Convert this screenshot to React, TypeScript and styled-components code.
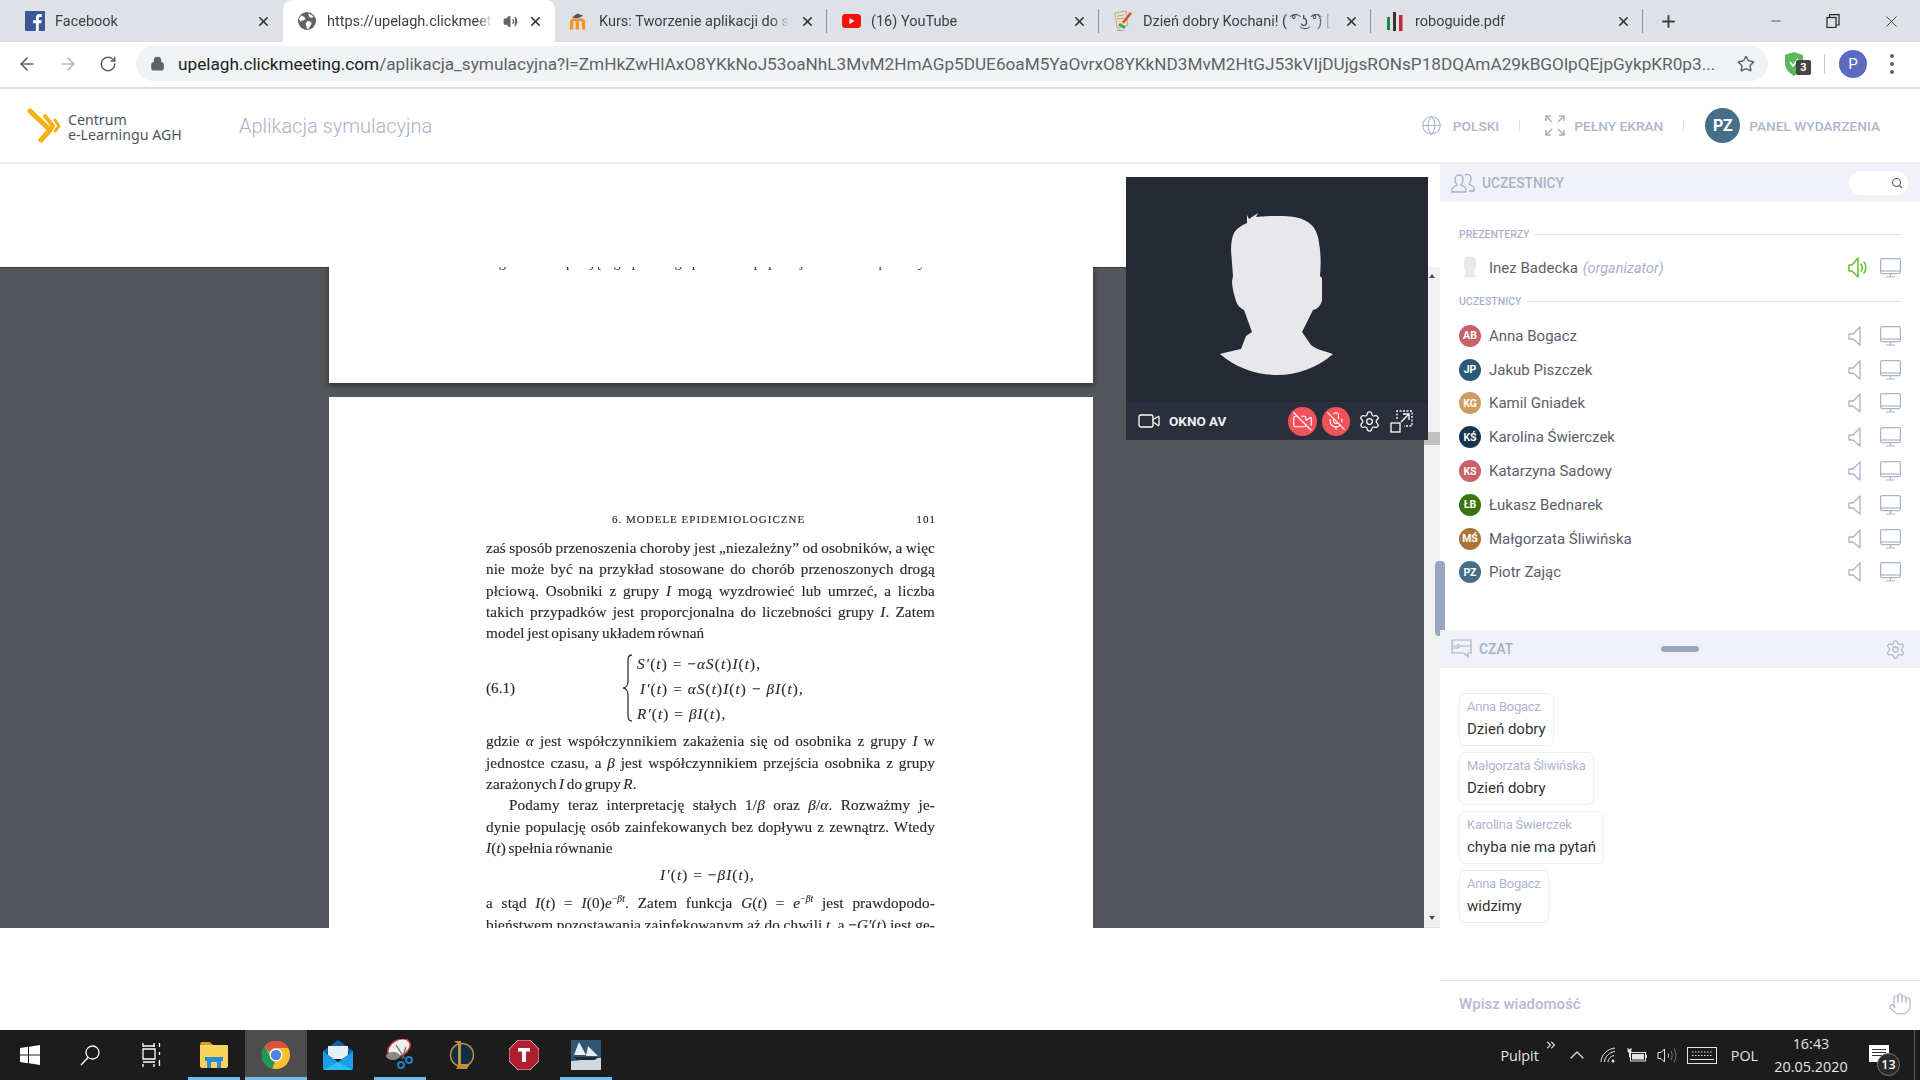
import React from "react";
import styled, { createGlobalStyle } from "styled-components";
import { Globe, Lock, ArrowLeft, ArrowRight, RotateCw, Star, X, Plus, Minus, Search, Video, VideoOff, MicOff, Settings, Volume2, Hand, ChevronUp, ChevronsRight } from "lucide-react";

const Global = createGlobalStyle`
  html, body { margin: 0; padding: 0; background: #fff; overflow: hidden; }
  body { font-family: Roboto, "Liberation Sans", sans-serif; }
  * { box-sizing: border-box; }
`;

const Page = styled.div`
  width: 1920px; height: 1080px; display: flex; flex-direction: column; overflow: hidden; position: relative;
`;

/* ---------- Chrome tabs ---------- */
const TabStrip = styled.div`
  height: 42px; background: #dee1e6; display: flex; padding-left: 11px; align-items: stretch; flex: none;
`;
const Tab = styled.div<{ $active?: boolean; $sep?: boolean }>`
  width: 272px; height: 42px; display: flex; align-items: center; padding: 0 12px 0 14px; gap: 10px; position: relative;
  background: ${(p) => (p.$active ? "#fff" : "transparent")};
  border-radius: ${(p) => (p.$active ? "9px 9px 0 0" : "0")};
  &::after {
    content: ""; display: ${(p) => (p.$sep ? "block" : "none")};
    position: absolute; right: 0; top: 9px; height: 24px; width: 1px; background: #8f9296;
  }
`;
const TabIconSlot = styled.span`
  width: 20px; height: 22px; flex: none; display: flex; align-items: center; justify-content: center;
`;
const TabTitle = styled.span`
  flex: 1; min-width: 0; font-size: 14.5px; color: #3c4043; white-space: nowrap; overflow: hidden;
  mask-image: linear-gradient(90deg, #000 90%, transparent 100%);
`;
const TabClose = styled(X)`
  width: 15px; height: 15px; color: #2d2f33; stroke-width: 2.5; flex: none;
`;
const StripActions = styled.div`
  flex: 1; display: flex; align-items: center; padding-left: 16px; color: #3c4043;
`;
const WindowControls = styled.div`
  margin-left: auto; display: grid; grid-template-columns: 56px 58px 58px; align-items: center; justify-items: center; color: #222; height: 38px;
`;

/* ---------- Toolbar ---------- */
const Toolbar = styled.div`
  height: 47px; flex: none; background: #fff; border-bottom: 2px solid #dadce0; display: flex; align-items: center; padding: 0 0 2px 17px;
`;
const NavIcons = styled.div`
  display: flex; align-items: center; gap: 21px; width: 119px; color: #5f6368; flex: none;
`;
const Omnibox = styled.div`
  width: 1632px; height: 35px; border-radius: 18px; background: #f1f3f4; display: flex; align-items: center; padding: 0 12px 0 14px; flex: none;
`;
const UrlText = styled.div`
  width: 1548px; flex: none; margin: 0 11px 0 13px; font-size: 17.2px; color: #5f6368; white-space: nowrap; overflow: hidden;
  b { font-weight: 400; color: #202124; }
`;
const ToolbarRight = styled.div`
  flex: 1; display: flex; align-items: center; padding-left: 16px; position: relative;
`;
const ExtBadge = styled.span`
  position: absolute; left: 28px; top: 10px; width: 15px; height: 15px; background: #444; color: #fff; border-radius: 2px;
  font-size: 11px; font-weight: 700; display: flex; align-items: center; justify-content: center;
`;
const ToolSep = styled.span`
  width: 1px; height: 20px; background: #c8cacd; margin: 0 14px 0 20px;
`;
const ProfileCircle = styled.span`
  width: 28px; height: 28px; border-radius: 50%; background: #5c6bc0; color: #fff; font-size: 15px;
  display: flex; align-items: center; justify-content: center;
`;
const Dots = styled.span`
  margin-left: 23px; display: flex; flex-direction: column; gap: 4px;
  i { display: block; width: 4px; height: 4px; border-radius: 50%; background: #5f6368; }
`;

/* ---------- App header ---------- */
const AppHeader = styled.header`
  height: 75px; flex: none; background: #fff; border-bottom: 2px solid #eceef2; display: flex; align-items: center; padding: 0 40px 0 27px;
`;
const LogoText = styled.div`
  margin-left: 7px; padding-top: 3px; width: 171px; font-family: "Noto Sans", sans-serif; font-size: 14.2px; line-height: 15px; color: #4f5560; white-space: nowrap;
`;
const AppTitle = styled.div`
  font-size: 20px; font-weight: 300; color: #aab2ca;
`;
const HeaderRight = styled.div`
  margin-left: auto; display: flex; align-items: center; color: #aab2ca;
`;
const HeaderLabel = styled.span<{ $ml?: number }>`
  font-size: 13.7px; font-weight: 500; color: #aeb6ce; margin-left: ${(p) => p.$ml ?? 0}px;
`;
const HeaderSep = styled.span<{ $after?: number }>`
  width: 1px; height: 12px; background: #dde0ea; margin: 0 ${(p) => p.$after ?? 20}px 0 20px;
`;
const HeadAvatar = styled.span`
  width: 35px; height: 35px; border-radius: 50%; background: #456e88; color: #fff; font-weight: 700; font-size: 16px;
  display: flex; align-items: center; justify-content: center; margin: 0 9px 0 1px;
`;

/* ---------- Main ---------- */
const Main = styled.div`
  flex: 1; display: flex; min-height: 0; position: relative;
`;
const Workspace = styled.div`
  width: 1440px; flex: none; display: flex; flex-direction: column;
`;
const TopBand = styled.div`
  height: 103px; flex: none; background: #fff;
`;
const ViewerRow = styled.div`
  height: 661px; flex: none; display: flex;
`;
const Viewer = styled.div`
  flex: 1; background: #53565a; overflow: hidden; padding-left: 329px; box-shadow: inset 0 1px 0 #3a3c3f;
`;
const ScrollTrack = styled.div`
  width: 16px; flex: none; background: #f1f1f1; position: relative; border-bottom: 1px solid #e0e0e0;
`;
const ScrollThumb = styled.div`
  position: absolute; left: 0; right: 0; top: 165px; height: 13px; background: #c1c1c1;
`;
const ArrowUp = styled.div`
  position: absolute; left: 5px; top: 7px; width: 0; height: 0; border: 3.5px solid transparent; border-bottom: 4px solid #505050; border-top: 0;
`;
const ArrowDown = styled.div`
  position: absolute; left: 5px; bottom: 7px; width: 0; height: 0; border: 3.5px solid transparent; border-top: 4px solid #505050; border-bottom: 0;
`;
const DocPageTop = styled.div`
  width: 764px; height: 116px; background: #fff; overflow: hidden; box-shadow: 0 2px 6px rgba(0,0,0,.5);
`;
const ClippedLine = styled.div`
  margin: -12px 0 0 157px; width: 449px; font: 14.5px/1 "Liberation Serif", serif; color: #333; filter: blur(.6px); white-space: nowrap; overflow: hidden;
`;
const DocPage = styled.div`
  width: 764px; height: 540px; margin-top: 14px; background: #fff; padding: 112px 157px 0 157px; overflow: hidden;
  font-family: "Liberation Serif", serif; font-size: 15.2px; color: #2a2a2a;
`;
const DocBlur = styled.div`
  filter: blur(.5px); -webkit-text-stroke: .15px #2a2a2a;
`;
const RunHead = styled.div`
  display: flex; justify-content: space-between; height: 20px; line-height: 20px; font-size: 11px; padding-left: 126px; margin-bottom: 8px; letter-spacing: 1px;
`;
const DocLine = styled.div<{ $indent?: boolean; $last?: boolean }>`
  height: 21.3px; line-height: 21.3px; width: 449px; letter-spacing: .15px; word-spacing: -1.5px;
  text-align: justify; text-align-last: ${(p) => (p.$last ? "left" : "justify")};
  padding-left: ${(p) => (p.$indent ? "23px" : "0")};
`;
const Equations = styled.div`
  display: flex; align-items: center; height: 84px; margin: 3px 0 0;
`;
const EqNum = styled.span`
  width: 136px; flex: none;
`;
const BraceBox = styled.span`
  display: flex; flex: none; width: 11px; margin-right: 4px;
`;
const EqRows = styled.div`
  line-height: 25px; white-space: nowrap; letter-spacing: 1.1px;
`;
const EqRow = styled.div<{ $shift?: boolean }>`
  padding-left: ${(p) => (p.$shift ? 3 : 0)}px;
`;
const EqCentered = styled.div`
  height: 29px; line-height: 29px; text-align: center; margin: 2px 0 3px; padding-right: 7px; letter-spacing: 1.1px;
`;
const Sup = styled.sup`
  font-size: 9.5px; line-height: 0;
`;
const BottomBand = styled.div`
  flex: 1; background: #fff;
`;

/* ---------- AV window ---------- */
const AvWindow = styled.div`
  position: absolute; left: 1126px; top: 13px; width: 302px; height: 263px; background: #262a35; display: flex; flex-direction: column;
`;
const AvStage = styled.div`
  flex: 1; display: flex; align-items: flex-start; justify-content: center; padding-top: 36px;
`;
const AvBar = styled.div`
  height: 38px; flex: none; background: #2b2f3b; display: flex; align-items: center; padding: 0 15px 0 11px; color: #fff;
`;
const AvLabel = styled.span`
  font-size: 13.5px; font-weight: 700; color: #eef0f4; margin-left: 8px;
`;
const AvControls = styled.div`
  margin-left: auto; display: flex; align-items: center;
`;
const AvButton = styled.span`
  width: 28.5px; height: 29px; border-radius: 50%; background: #f4525a; display: flex; align-items: center; justify-content: center; margin-right: 5px;
`;
const AvPlain = styled.span<{ $ml: number }>`
  margin-left: ${(p) => p.$ml}px; display: flex; color: #fff;
`;

/* ---------- Sidebar ---------- */
const Sidebar = styled.aside`
  flex: 1; display: flex; flex-direction: column; background: #fff; position: relative;
`;
const SideThumb = styled.div`
  position: absolute; left: -5px; top: 397px; width: 10px; height: 75px; border-radius: 4px; background: #9aa5c0;
`;
const PanelHead = styled.div<{ $h: number }>`
  height: ${(p) => p.$h}px; flex: none; background: #f0f2f8; display: flex; align-items: center; padding: 0 12px 0 11px; color: #a5aec8; position: relative;
`;
const PanelTitle = styled.span`
  font-size: 13.8px; font-weight: 500; color: #a9b1c9; margin-left: 7px;
`;
const HandleBar = styled.span`
  position: absolute; left: 221px; top: 16px; width: 38px; height: 6px; border-radius: 3px; background: #9aa5c0;
`;
const HeadGear = styled.span`
  margin-left: auto; margin-right: 2px; display: flex;
`;
const SearchPill = styled.div`
  margin-left: auto; width: 59px; height: 24px; border-radius: 12px; background: #fff; display: flex; align-items: center; justify-content: flex-end; padding-right: 5px; color: #555b68;
`;
const Participants = styled.div`
  height: 428px; flex: none; padding: 23px 19px 0 19px;
`;
const GroupLabel = styled.div`
  display: flex; align-items: center; gap: 5px; font-size: 10.5px; font-weight: 500; color: #aab2ca; height: 18px;
  &::after { content: ""; flex: 1; height: 1px; background: #dfe2ee; }
`;
const ListGap = styled.div`
  height: 9px;
`;
const PersonRow = styled.div<{ $h?: number }>`
  height: ${(p) => p.$h ?? 33.8}px; display: flex; align-items: center;
`;
const AvatarCircle = styled.span<{ $c: string }>`
  width: 22px; height: 22px; border-radius: 50%; background: ${(p) => p.$c}; color: #fff; font-size: 10.5px; font-weight: 700;
  display: flex; align-items: center; justify-content: center; flex: none;
`;
const GhostAvatar = styled.span`
  width: 22px; display: flex; justify-content: center; flex: none;
`;
const PersonName = styled.span`
  margin-left: 8px; font-size: 15px; color: #5b606c;
  em { color: #a9b1c9; font-size: 14.5px; margin-left: 1px; }
`;
const PersonIcons = styled.span`
  margin-left: auto; display: flex; align-items: center; gap: 11px; color: #aab2ca;
`;
const SpeakerSlot = styled.span`
  width: 21px; display: flex;
`;
const ChatList = styled.div`
  flex: 1; padding: 25px 19px 0; display: flex; flex-direction: column; align-items: flex-start; gap: 6px;
`;
const Bubble = styled.div`
  height: 53px; border: 1px solid #eceef5; border-radius: 6px; padding: 3px 7px 0;
`;
const BubbleName = styled.div`
  font-size: 13px; line-height: 20px; color: #aeb6ce; letter-spacing: -.25px; white-space: nowrap;
`;
const BubbleText = styled.div`
  font-size: 15px; line-height: 25px; color: #333; white-space: nowrap;
`;
const ChatInput = styled.div`
  height: 50px; flex: none; border-top: 1px solid #e6e8f1; display: flex; align-items: center; padding: 0 8px 3px 19px; color: #aab2ca;
`;
const Placeholder = styled.span`
  font-size: 15px; font-weight: 500; color: #b3bad0;
`;
const HandSlot = styled.span`
  margin-left: auto; display: flex;
`;

/* ---------- Taskbar ---------- */
const Taskbar = styled.div`
  height: 50px; flex: none; background: #1c1c1c; display: flex; align-items: center; color: #fff;
`;
const TaskItem = styled.div<{ $active?: boolean; $open?: boolean; $ml?: number }>`
  width: 62px; height: 50px; flex: none; display: flex; align-items: center; justify-content: center; position: relative;
  margin-left: ${(p) => p.$ml ?? 0}px;
  background: ${(p) => (p.$active ? "#4d4d4d" : "transparent")};
  &::after {
    content: ""; display: ${(p) => (p.$open ? "block" : "none")}; position: absolute; bottom: 0; height: 3px;
    left: ${(p) => (p.$active ? 0 : 5)}px; right: ${(p) => (p.$active ? 0 : 5)}px; background: #76b9ed;
  }
`;
const Tray = styled.div`
  margin-left: auto; display: flex; align-items: center; height: 50px; position: relative; padding-right: 5px;
`;
const TrayText = styled.span<{ $ml?: number }>`
  font-size: 14.3px; color: #e4e4e4; margin-left: ${(p) => p.$ml ?? 0}px; font-family: "Open Sans", sans-serif;
`;
const TrayIcon = styled.span<{ $ml?: number; $raise?: number }>`
  display: flex; margin-left: ${(p) => p.$ml ?? 0}px; margin-top: ${(p) => -(p.$raise ?? 0)}px; color: #e4e4e4;
`;
const Clock = styled.div`
  width: 78px; margin-left: 14px; text-align: center; font-family: "Open Sans", sans-serif; font-size: 14.4px; line-height: 23px; color: #e4e4e4; white-space: nowrap;
`;
const NotifyBox = styled.div`
  width: 46px; height: 50px; margin-left: 19px; position: relative; border-right: 1px solid #5a5a5a;
`;
const NotifySheet = styled.span`
  position: absolute; left: 0; top: 15px; width: 20px; height: 17px; background: #fff; padding: 4px 3px;
  display: flex; flex-direction: column; gap: 2px;
  i { display: block; height: 1px; background: #333; }
`;
const NotifyCount = styled.span`
  position: absolute; left: 8px; top: 23px; width: 23px; height: 23px; border-radius: 50%; background: #2a2a2a; border: 1px solid #777;
  font-family: "Open Sans", sans-serif; font-size: 12.5px; font-weight: 600; color: #fff; display: flex; align-items: center; justify-content: center;
`;

/* ---------- Drawn icons ---------- */
const FacebookIcon = () => (
  <svg width="20" height="20" viewBox="0 0 20 20"><rect width="20" height="20" rx="1" fill="#3b5998" /><path d="M13.8 20v-7.7h2.5l.4-3h-2.9V7.4c0-.9.3-1.5 1.5-1.5h1.5V3.2c-.3 0-1.2-.1-2.2-.1-2.2 0-3.7 1.3-3.7 3.8v2.3H8v3h2.9V20z" fill="#fff" /></svg>
);
const GlobeFilled = () => (
  <svg width="18" height="18" viewBox="0 0 18 18"><circle cx="9" cy="9" r="9" fill="#5f6368" /><path d="M3 3.500c2 .5 3 1 4 2.500s-1 2.500-2 2.500-2 0-2.500 1.500L1 7zM10 9c2 0 3.500 1 3.500 2.500S12 14 11 16s-2.500 1-2.500-1S7 12 8 11s.5-2 2-2zM11 1c1 2 2 2 3 2l1.500 2c-1 1-3 1-4 0S10 2 11 1z" fill="#fff" /></svg>
);
const MoodleIcon = () => (
  <svg width="21" height="18" viewBox="0 0 21 18"><path d="M1 18V10c0-2.500 2-4 4-4 1.500 0 2.500.5 3.500 1.500C9.500 6.500 11 6 12.500 6c3 0 4.500 2 4.500 4.500V18h-3.500v-7.500c0-1-.5-1.500-1.500-1.500s-1.500.5-1.500 1.500V18H7v-7.500C7 9.500 6.500 9 5.500 9S4.500 9.500 4.500 10.500V18z" fill="#f2932a" /><path d="M3 5l6-4 6 2.500-6 3z" fill="#555" /></svg>
);
const YouTubeIcon = () => (
  <svg width="19" height="14" viewBox="0 0 19 14"><rect width="19" height="14" rx="3.500" fill="#fa0f0f" /><path d="M7.500 4v6l5-3z" fill="#fff" /></svg>
);
const NotepadIcon = () => (
  <svg width="20" height="22" viewBox="0 0 20 22"><path d="M2 3l11-2 2 14-11 3z" fill="#e9dfc4" stroke="#999" strokeWidth=".7" /><path d="M4 6l7-1M4 9l7-1" stroke="#b88" strokeWidth=".8" /><path d="M9 12l8-10 2 1.500-8 10z" fill="#d8502a" /><path d="M5 15l6 4 2-2-6-4z" fill="#3caa3c" /><path d="M5 19l8 2-9 0z" fill="#aaa" /></svg>
);
const PdfBarsIcon = () => (
  <svg width="16" height="21" viewBox="0 0 16 21"><rect x="0" y="6" width="3" height="13" fill="#1c8a47" /><rect x="6" y="1" width="3" height="19" fill="#333" /><rect x="12" y="4" width="3.500" height="16" fill="#c8223b" /></svg>
);
const RestoreIcon = () => (
  <svg width="14" height="14" viewBox="0 0 14 14" fill="none" stroke="#222" strokeWidth="1.200"><rect x="1" y="3.500" width="9" height="10" /><path d="M3.500 3.500V.6H13v10.400h-3" /></svg>
);
const Logo = () => (
  <svg width="34" height="35" viewBox="0 0 34 35" fill="none" stroke="#f7b011" strokeLinecap="round" strokeLinejoin="round"><path d="M3 3l20 19-9 10" strokeWidth="5" /><path d="M18 8l8 10-6 8" strokeWidth="4" /><path d="M28 12l4 6-4 5" strokeWidth="3" /></svg>
);
const ExpandIcon = () => (
  <svg width="20" height="21" viewBox="0 0 20 21" fill="none" stroke="#aab2ca" strokeWidth="1.500"><path d="M1 6V1h5M1 1l6 6M19 6V1h-5M19 1l-6 6M1 15v5h5M1 20l6-6M19 15v5h-5M19 20l-6-6" /></svg>
);
const PeopleIcon = () => (
  <svg width="24" height="20" viewBox="0 0 24 20" fill="none" stroke="#a5aec8" strokeWidth="1.300"><path d="M1 19v-3c0-2 4-3 5-4 0-1-2-2-2-5 0-3 1.500-5 4-5s4 2 4 5c0 3-2 4-2 5 1 1 5 2 5 4v3z" /><path d="M14 2c2-1 6-1 6 4 0 3-2 4-2 5 1 1 5 2 5 4v3h-5" /></svg>
);
const Silhouette = () => (
  <svg width="114" height="163" viewBox="0 0 114 163" fill="#e7e7ec"><path d="M27 2l2 4 9-6-2 4C48 3 52 3 58 3c12 0 22 1 28 5 8 4 12 12 13 22 2 10 2 22 1 33l2 2v22c-1 5-4 9-9 10l-11 22 9 13c3 3 9 5 22 9-16 14-36 21-56 21S16 155 0 141c8-2 15-4 21-5l5-13 6-4-8-22c-4-2-7-5-8-9-2-7-4-13-4-20l1-5-2-26c0-7 1-13 3-17 3-5 8-8 13-10z" /></svg>
);
const OutlineSpeaker = () => (
  <svg width="13" height="20" viewBox="0 0 13 20" fill="none" stroke="#aab2ca" strokeWidth="1.300" strokeLinejoin="round"><path d="M12 1v18L5 13H1V8h4z" /></svg>
);
const GreenSpeaker = () => (
  <svg width="21" height="21" viewBox="0 0 21 21" fill="none" stroke="#62c02e" strokeWidth="1.500" strokeLinejoin="round" strokeLinecap="round"><path d="M10 1v19L4 14H1V8h3z" /><path d="M13 7c1.500 2 1.500 5 0 7M16 5c2.500 3 2.500 8 0 11" /></svg>
);
const Screen = () => (
  <svg width="21" height="20" viewBox="0 0 21 20" fill="none" stroke="#aab2ca" strokeWidth="1.200"><rect x=".6" y=".6" width="19.800" height="15" rx="1.500" /><path d="M1 13h19" /><path d="M10.500 16v2.500M6 19h9" /></svg>
);
const ChatIcon = () => (
  <svg width="21" height="20" viewBox="0 0 21 20" fill="none" stroke="#aab2ca" strokeWidth="1.200"><path d="M1 1h19v13h-3v4l-4-4H1z" /><path d="M1 7h5l2-2M20 7H9l-2 2H1" /></svg>
);
const CurlyBrace = () => (
  <svg width="11" height="68" viewBox="0 0 11 68" fill="none" stroke="#333" strokeWidth="1.300"><path d="M10 1C6 1 6 4 6 8v19c0 4-2 7-5 7 3 0 5 3 5 7v19c0 4 0 7 4 7" /></svg>
);
const WindowsLogo = () => (
  <svg width="20" height="20" viewBox="0 0 20 20" fill="#fff"><path d="M0 3l8-1.200v7.700H0zM9 1.700L20 0v9.500H9zM0 10.500h8v7.700L0 17zM9 10.500h11V20L9 18.300z" /></svg>
);
const SearchGlass = () => (
  <svg width="20" height="21" viewBox="0 0 20 21" fill="none" stroke="#fff" strokeWidth="1.300"><circle cx="12.500" cy="7.500" r="6.500" /><path d="M8 12.500L1 20" /></svg>
);
const TaskView = () => (
  <svg width="20" height="26" viewBox="0 0 20 26" fill="none" stroke="#fff" strokeWidth="1.300"><path d="M1 5V1M12 5V1M1 7h12v10H1zM1 20h12M1 25v-3M12 25v-3M1 4h12M17.500 1v4M17.500 10v3M17.500 18v6" /></svg>
);
const FolderIcon = () => (
  <svg width="28" height="28" viewBox="0 0 28 28"><path d="M0 3c0-1 1-2 2-2h8l3 3H1z" fill="#d99a16" /><path d="M0 4h27c.5 0 1 .5 1 1v20c0 1-1 2-2 2H2c-1 0-2-1-2-2z" fill="#fbd35a" /><path d="M5 16h18v4h-2v7h-4v-6h-6v6H7v-7H5z" fill="#2a8dd8" /></svg>
);
const ChromeLogo = () => (
  <svg width="28" height="28" viewBox="0 0 28 28"><circle cx="14" cy="14" r="14" fill="#fbc02d" /><path d="M14 0a14 14 0 0 1 12.100 7H14a7 7 0 0 0-6.500 4.500L2.800 5.600A14 14 0 0 1 14 0z" fill="#dd5044" /><path d="M2.800 5.600l5 8.500A7 7 0 0 0 13 21l-3 7A14 14 0 0 1 2.800 5.600z" fill="#1f9a55" /><circle cx="14" cy="14" r="6.500" fill="#fff" /><circle cx="14" cy="14" r="5.200" fill="#4a84e8" /></svg>
);
const MailIcon = () => (
  <svg width="30" height="30" viewBox="0 0 30 30"><path d="M0 11L15 0l15 11v2H0z" fill="#0a62b4" /><path d="M5 6h20v13H5z" fill="#e6f0f7" /><path d="M0 11l15 11 15-11v17a2 2 0 0 1-2 2H2a2 2 0 0 1-2-2z" fill="#1d9be6" /><path d="M0 30l15-8 15 8z" fill="#29c0f5" /></svg>
);
const SnipIcon = () => (
  <svg width="28" height="32" viewBox="0 0 28 32"><ellipse cx="13" cy="9" rx="12" ry="8" fill="#eee" stroke="#c9373a" strokeWidth="1.500" transform="rotate(-30 13 9)" /><ellipse cx="7" cy="17" rx="7" ry="4" fill="#888" /><path d="M10 6l9 14M20 8L16 20" stroke="#666" strokeWidth="1.200" /><circle cx="15" cy="26" r="3" fill="none" stroke="#1784c8" strokeWidth="2" /><circle cx="23" cy="21" r="3" fill="none" stroke="#1784c8" strokeWidth="2" /></svg>
);
const LolIcon = () => (
  <svg width="26" height="30" viewBox="0 0 26 30"><circle cx="13" cy="15" r="11.500" fill="#0e2e47" stroke="#c0903c" strokeWidth="1.500" /><path d="M5 1h7v23h9l-3 5H7l2-3V4z" fill="#c0903c" /></svg>
);
const StopT = () => (
  <svg width="30" height="30" viewBox="0 0 30 30"><path d="M9 0h12l9 9v12l-9 9H9l-9-9V9z" fill="#b01e30" stroke="#ddd" strokeWidth=".8" /><path d="M9 8h12v3.500h-4V22h-4V11.500H9z" fill="#fff" /></svg>
);
const BoatIcon = () => (
  <svg width="30" height="30" viewBox="0 0 30 30"><rect width="30" height="30" fill="#31566f" /><path d="M8 2l7 13H3zM17 6l10 10H15z" fill="#e6eef3" /><path d="M0 21c8 0 18-3 30-3v12H0z" fill="#cfd8de" /><path d="M3 17h24l-3 3H6z" fill="#1a2c3a" /></svg>
);
const WifiIcon = () => (
  <svg width="16" height="16" viewBox="0 0 16 16" fill="none" stroke="#e4e4e4" strokeWidth="1"><path d="M1 15C1 8 7 2 15 1M4.500 15c0-5 5-10 10.500-10.500M8 15c0-3 3-6 6-6.500" /><circle cx="13" cy="14" r="1.500" fill="#e4e4e4" stroke="none" /></svg>
);
const BatteryIcon = () => (
  <svg width="20" height="15" viewBox="0 0 20 15" fill="none" stroke="#e4e4e4"><rect x="3.500" y="4.500" width="15" height="8.500" /><rect x="5" y="6" width="12" height="5.500" fill="#e4e4e4" stroke="none" /><path d="M19.500 7v3" /><circle cx="2.500" cy="3" r="2" fill="#e4e4e4" stroke="none" /><path d="M1 0v2M4 0v2M2.500 5v4h1" /></svg>
);
const VolumeIcon = () => (
  <svg width="20" height="17" viewBox="0 0 20 17" fill="none" stroke="#e4e4e4" strokeWidth="1"><path d="M1 5.500h3L7.500 2v13L4 11.500H1z" /><path d="M11 6.500c.8 1.200.8 2.800 0 4" /><path d="M14 4c1.500 2.500 1.500 6.500 0 9M17 1.500c2.500 4 2.500 10 0 14" stroke="#777" /></svg>
);
const KeyboardIcon = () => (
  <svg width="30" height="17" viewBox="0 0 30 17" fill="none" stroke="#e4e4e4"><rect x=".5" y=".5" width="29" height="16" /><path d="M5 5h20M5 8.500h20" strokeDasharray="1.500 1.500" /><path d="M3 12.500h24" strokeWidth="1" /></svg>
);

const tabs = [
  { icon: <FacebookIcon />, title: "Facebook" },
  { icon: <GlobeFilled />, title: "https://upelagh.clickmeet", active: true, audio: true },
  { icon: <MoodleIcon />, title: "Kurs: Tworzenie aplikacji do s", sep: true },
  { icon: <YouTubeIcon />, title: "(16) YouTube", sep: true },
  { icon: <NotepadIcon />, title: "Dzień dobry Kochani! ( ͡° ͜ʖ ͡°) [", sep: true },
  { icon: <PdfBarsIcon />, title: "roboguide.pdf", sep: true },
];

const people = [
  ["AB", "#c9616b", "Anna Bogacz"],
  ["JP", "#2a5a78", "Jakub Piszczek"],
  ["KG", "#cf9d62", "Kamil Gniadek"],
  ["KŚ", "#15384f", "Karolina Świerczek"],
  ["KS", "#c9616b", "Katarzyna Sadowy"],
  ["ŁB", "#3b730f", "Łukasz Bednarek"],
  ["MŚ", "#a97434", "Małgorzata Śliwińska"],
  ["PZ", "#456e88", "Piotr Zając"],
];

const messages = [
  ["Anna Bogacz", "Dzień dobry"],
  ["Małgorzata Śliwińska", "Dzień dobry"],
  ["Karolina Świerczek", "chyba nie ma pytań"],
  ["Anna Bogacz", "widzimy"],
];

export default function App() {
  return (
    <Page>
      <Global />
      <TabStrip>
        {tabs.map((t) => (
          <Tab key={t.title} $active={t.active} $sep={t.sep}>
            <TabIconSlot>{t.icon}</TabIconSlot>
            <TabTitle>{t.title}</TabTitle>
            {t.audio && <Volume2 size={15} color="#5f6368" fill="#5f6368" />}
            <TabClose />
          </Tab>
        ))}
        <StripActions>
          <Plus size={19} strokeWidth={2.4} />
          <WindowControls>
            <Minus size={14} strokeWidth={1.2} />
            <RestoreIcon />
            <X size={19} strokeWidth={1} />
          </WindowControls>
        </StripActions>
      </TabStrip>

      <Toolbar>
        <NavIcons>
          <ArrowLeft size={20} />
          <ArrowRight size={20} color="#b6b8bb" />
          <RotateCw size={18} />
        </NavIcons>
        <Omnibox>
          <Lock size={15} color="#5f6368" fill="#5f6368" />
          <UrlText>
            <b>upelagh.clickmeeting.com</b>/aplikacja_symulacyjna?l=ZmHkZwHlAxO8YKkNoJ53oaNhL3MvM2HmAGp5DUE6oaM5YaOvrxO8YKkND3MvM2HtGJ53kVIjDUjgsRONsP18DQAmA29kBGOlpQEjpGykpKR0p3...
          </UrlText>
          <Star size={18} color="#5f6368" />
        </Omnibox>
        <ToolbarRight>
          <svg width="20" height="26" viewBox="0 0 20 26"><path d="M10 1l9 3v8c0 6-4 10-9 13C5 22 1 18 1 12V4z" fill="#5cb85c" /><path d="M6 11l3 4 5-7" stroke="#fff" strokeWidth="1.600" fill="none" /></svg>
          <ExtBadge>3</ExtBadge>
          <ToolSep />
          <ProfileCircle>P</ProfileCircle>
          <Dots><i /><i /><i /></Dots>
        </ToolbarRight>
      </Toolbar>

      <AppHeader>
        <Logo />
        <LogoText>Centrum<br />e-Learningu AGH</LogoText>
        <AppTitle>Aplikacja symulacyjna</AppTitle>
        <HeaderRight>
          <Globe size={21} strokeWidth={1.2} />
          <HeaderLabel $ml={11}>POLSKI</HeaderLabel>
          <HeaderSep $after={25} />
          <ExpandIcon />
          <HeaderLabel $ml={9}>PEŁNY EKRAN</HeaderLabel>
          <HeaderSep />
          <HeadAvatar>PZ</HeadAvatar>
          <HeaderLabel>PANEL WYDARZENIA</HeaderLabel>
        </HeaderRight>
      </AppHeader>

      <Main>
        <Workspace>
          <TopBand />
          <ViewerRow>
            <Viewer>
              <DocPageTop>
                <ClippedLine>zagadnienia opisującego przebieg epidemii w populacji osobników podatnych</ClippedLine>
              </DocPageTop>
              <DocPage>
                <DocBlur>
                  <RunHead><span>6. MODELE EPIDEMIOLOGICZNE</span><span>101</span></RunHead>
                  <DocLine>zaś sposób przenoszenia choroby jest „niezależny” od osobników, a więc</DocLine>
                  <DocLine>nie może być na przykład stosowane do chorób przenoszonych drogą</DocLine>
                  <DocLine>płciową. Osobniki z grupy <i>I</i> mogą wyzdrowieć lub umrzeć, a liczba</DocLine>
                  <DocLine>takich przypadków jest proporcjonalna do liczebności grupy <i>I</i>. Zatem</DocLine>
                  <DocLine $last>model jest opisany układem równań</DocLine>
                  <Equations>
                    <EqNum>(6.1)</EqNum>
                    <BraceBox><CurlyBrace /></BraceBox>
                    <EqRows>
                      <EqRow><i>S′</i>(<i>t</i>) = −<i>αS</i>(<i>t</i>)<i>I</i>(<i>t</i>),</EqRow>
                      <EqRow $shift><i>I′</i>(<i>t</i>) = <i>αS</i>(<i>t</i>)<i>I</i>(<i>t</i>) − <i>βI</i>(<i>t</i>),</EqRow>
                      <EqRow><i>R′</i>(<i>t</i>) = <i>βI</i>(<i>t</i>),</EqRow>
                    </EqRows>
                  </Equations>
                  <DocLine>gdzie <i>α</i> jest współczynnikiem zakażenia się od osobnika z grupy <i>I</i> w</DocLine>
                  <DocLine>jednostce czasu, a <i>β</i> jest współczynnikiem przejścia osobnika z grupy</DocLine>
                  <DocLine $last>zarażonych <i>I</i> do grupy <i>R</i>.</DocLine>
                  <DocLine $indent>Podamy teraz interpretację stałych 1/<i>β</i> oraz <i>β</i>/<i>α</i>. Rozważmy je-</DocLine>
                  <DocLine>dynie populację osób zainfekowanych bez dopływu z zewnątrz. Wtedy</DocLine>
                  <DocLine $last><i>I</i>(<i>t</i>) spełnia równanie</DocLine>
                  <EqCentered><i>I′</i>(<i>t</i>) = −<i>βI</i>(<i>t</i>),</EqCentered>
                  <DocLine>a stąd <i>I</i>(<i>t</i>) = <i>I</i>(0)<i>e</i><Sup>−<i>βt</i></Sup>. Zatem funkcja <i>G</i>(<i>t</i>) = <i>e</i><Sup>−<i>βt</i></Sup> jest prawdopodo-</DocLine>
                  <DocLine>bieństwem pozostawania zainfekowanym aż do chwili <i>t</i>, a −<i>G′</i>(<i>t</i>) jest ge-</DocLine>
                </DocBlur>
              </DocPage>
            </Viewer>
            <ScrollTrack>
              <ArrowUp />
              <ScrollThumb />
              <ArrowDown />
            </ScrollTrack>
          </ViewerRow>
          <BottomBand />
        </Workspace>

        <AvWindow>
          <AvStage><Silhouette /></AvStage>
          <AvBar>
            <Video size={24} strokeWidth={1.3} />
            <AvLabel>OKNO AV</AvLabel>
            <AvControls>
              <AvButton><VideoOff size={21} strokeWidth={1.3} color="#fff" /></AvButton>
              <AvButton><MicOff size={20} strokeWidth={1.3} color="#fff" /></AvButton>
              <AvPlain $ml={3}><Settings size={23} strokeWidth={1.3} /></AvPlain>
              <AvPlain $ml={9}>
                <svg width="23" height="23" viewBox="0 0 23 23" fill="none" stroke="#fff" strokeWidth="1.300"><rect x="1" y="13" width="9" height="9" /><path d="M7 9V1h15v15h-8" strokeDasharray="2 1.500" /><path d="M11 12l8-8M13 4h6v6" /></svg>
              </AvPlain>
            </AvControls>
          </AvBar>
        </AvWindow>

        <Sidebar>
          <SideThumb />
          <PanelHead $h={38}>
            <PeopleIcon />
            <PanelTitle>UCZESTNICY</PanelTitle>
            <SearchPill><Search size={12} strokeWidth={2.2} /></SearchPill>
          </PanelHead>
          <Participants>
            <GroupLabel>PREZENTERZY</GroupLabel>
            <PersonRow $h={49}>
              <GhostAvatar>
                <svg width="14" height="21" viewBox="0 0 14 21" fill="#e7e7ec"><path d="M3 0h8c2 1 2 4 2 8 0 3-1 5-2 6l1 4 2 1c-3 2-11 2-14 0l2-1 1-4C2 13 1 11 1 8c0-4 0-7 2-8z" /></svg>
              </GhostAvatar>
              <PersonName>Inez Badecka <em>(organizator)</em></PersonName>
              <PersonIcons><SpeakerSlot><GreenSpeaker /></SpeakerSlot><Screen /></PersonIcons>
            </PersonRow>
            <GroupLabel>UCZESTNICY</GroupLabel>
            <ListGap />
            {people.map(([a, c, n]) => (
              <PersonRow key={n}>
                <AvatarCircle $c={c}>{a}</AvatarCircle>
                <PersonName>{n}</PersonName>
                <PersonIcons><SpeakerSlot><OutlineSpeaker /></SpeakerSlot><Screen /></PersonIcons>
              </PersonRow>
            ))}
          </Participants>
          <PanelHead $h={38}>
            <ChatIcon />
            <PanelTitle>CZAT</PanelTitle>
            <HandleBar />
            <HeadGear><Settings size={21} strokeWidth={1.2} /></HeadGear>
          </PanelHead>
          <ChatList>
            {messages.map(([n, m], i) => (
              <Bubble key={i}>
                <BubbleName>{n}</BubbleName>
                <BubbleText>{m}</BubbleText>
              </Bubble>
            ))}
          </ChatList>
          <ChatInput>
            <Placeholder>Wpisz wiadomość</Placeholder>
            <HandSlot><Hand size={24} strokeWidth={1.2} /></HandSlot>
          </ChatInput>
        </Sidebar>
      </Main>

      <Taskbar>
        <TaskItem $ml={-1}><WindowsLogo /></TaskItem>
        <TaskItem $ml={-2}><SearchGlass /></TaskItem>
        <TaskItem><TaskView /></TaskItem>
        <TaskItem $open><FolderIcon /></TaskItem>
        <TaskItem $active $open><ChromeLogo /></TaskItem>
        <TaskItem><MailIcon /></TaskItem>
        <TaskItem $open><SnipIcon /></TaskItem>
        <TaskItem><LolIcon /></TaskItem>
        <TaskItem><StopT /></TaskItem>
        <TaskItem $open><BoatIcon /></TaskItem>
        <Tray>
          <TrayText>Pulpit</TrayText>
          <TrayIcon $ml={5} $raise={20}><ChevronsRight size={14} /></TrayIcon>
          <TrayIcon $ml={7}><ChevronUp size={24} strokeWidth={1.2} /></TrayIcon>
          <TrayIcon $ml={11}><WifiIcon /></TrayIcon>
          <TrayIcon $ml={11}><BatteryIcon /></TrayIcon>
          <TrayIcon $ml={10}><VolumeIcon /></TrayIcon>
          <TrayIcon $ml={10}><KeyboardIcon /></TrayIcon>
          <TrayText $ml={14}>POL</TrayText>
          <Clock>16:43<br />20.05.2020</Clock>
          <NotifyBox>
            <NotifySheet><i /><i /><i /></NotifySheet>
            <NotifyCount>13</NotifyCount>
          </NotifyBox>
        </Tray>
      </Taskbar>
    </Page>
  );
}
